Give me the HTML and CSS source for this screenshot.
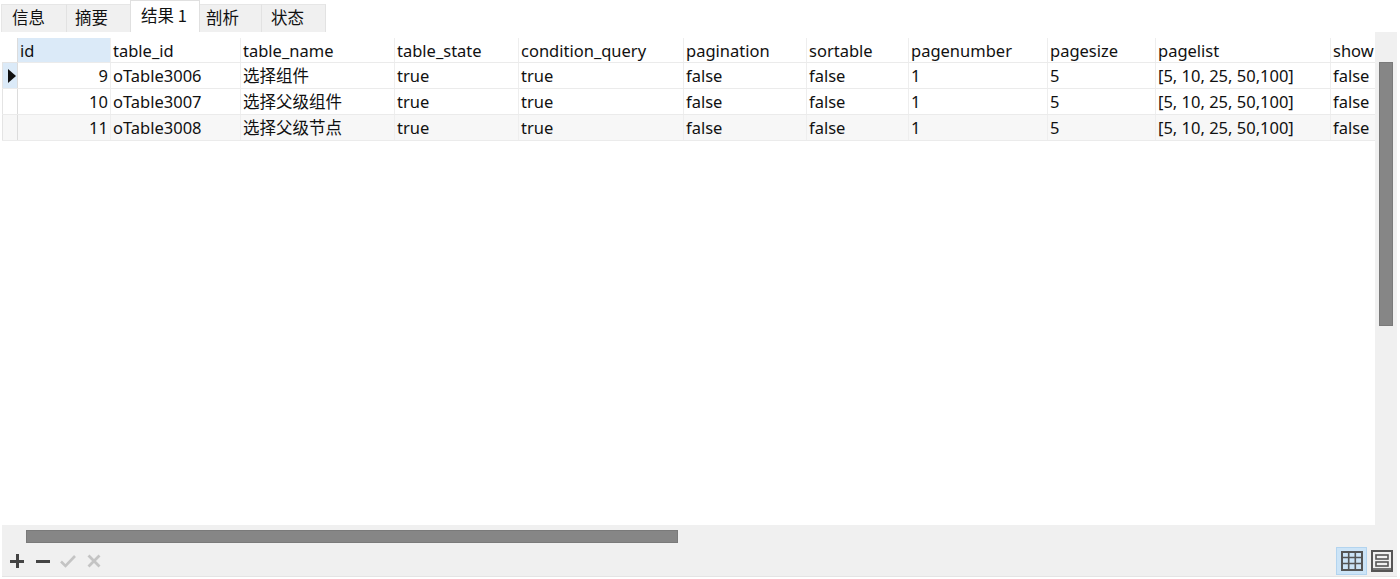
FILE: index.html
```html
<!DOCTYPE html>
<html lang="zh">
<head>
<meta charset="utf-8">
<link rel="stylesheet" href="styles.css">
</head>
<body>
<div class="app">
  <div class="tabs">
    <div class="tab t1">信息</div>
    <div class="tab t2">摘要</div>
    <div class="tab active t3">结果 1</div>
    <div class="tab t4">剖析</div>
    <div class="tab t5">状态</div>
  </div>
  <div class="frame">
    <div class="body-row">
      <div class="view">
        <table class="grid">
          <colgroup>
            <col class="c-rh"><col class="c-id"><col class="c-tid"><col class="c-tname"><col class="c-tstate"><col class="c-cq"><col class="c-pag"><col class="c-sort"><col class="c-pn"><col class="c-ps"><col class="c-pl"><col class="c-show">
          </colgroup>
          <thead>
            <tr>
              <th class="rh"></th>
              <th class="sel">id</th>
              <th>table_id</th>
              <th>table_name</th>
              <th>table_state</th>
              <th>condition_query</th>
              <th>pagination</th>
              <th>sortable</th>
              <th>pagenumber</th>
              <th>pagesize</th>
              <th>pagelist</th>
              <th>show</th>
            </tr>
          </thead>
          <tbody>
            <tr>
              <td class="rh cur"><span class="arrow"></span></td>
              <td class="num">9</td><td>oTable3006</td><td>选择组件</td><td>true</td><td>true</td><td>false</td><td>false</td><td>1</td><td>5</td><td>[5, 10, 25, 50,100]</td><td>false</td>
            </tr>
            <tr>
              <td class="rh"></td>
              <td class="num">10</td><td>oTable3007</td><td>选择父级组件</td><td>true</td><td>true</td><td>false</td><td>false</td><td>1</td><td>5</td><td>[5, 10, 25, 50,100]</td><td>false</td>
            </tr>
            <tr class="alt">
              <td class="rh"></td>
              <td class="num">11</td><td>oTable3008</td><td>选择父级节点</td><td>true</td><td>true</td><td>false</td><td>false</td><td>1</td><td>5</td><td>[5, 10, 25, 50,100]</td><td>false</td>
            </tr>
          </tbody>
        </table>
      </div>
      <div class="vscroll"><div class="vthumb"></div></div>
    </div>
    <div class="hscroll"><div class="hthumb"></div></div>
    <div class="toolbar">
      <div class="tools-left">
        <span class="ico plus"></span>
        <span class="ico minus"></span>
        <svg class="ico-svg" width="18" height="16" viewBox="0 0 18 16"><path d="M2 8.5 L6.5 13 L16 3" fill="none" stroke="#c4c4c4" stroke-width="2.6"/></svg>
        <svg class="ico-svg" width="16" height="16" viewBox="0 0 16 16"><path d="M2.5 2.5 L13.5 13.5 M13.5 2.5 L2.5 13.5" fill="none" stroke="#c4c4c4" stroke-width="2.8"/></svg>
      </div>
      <div class="tools-right">
        <div class="vbtn on">
          <svg width="22" height="20" viewBox="0 0 22 20"><rect x="1" y="1" width="20" height="18" fill="none" stroke="#555" stroke-width="2"/><path d="M1 6.5H21M1 12.5H21M7.7 1V19M14.3 1V19" stroke="#555" stroke-width="1.6"/></svg>
        </div>
        <div class="vbtn form">
          <svg width="22" height="22" viewBox="0 0 22 22"><rect x="1" y="1" width="20" height="20" fill="none" stroke="#555" stroke-width="2"/><rect x="5" y="5" width="12" height="4" fill="none" stroke="#555" stroke-width="1.6"/><rect x="5" y="12" width="12" height="4" fill="none" stroke="#555" stroke-width="1.6"/><path d="M1 19H21" stroke="#555" stroke-width="1.6"/></svg>
        </div>
      </div>
    </div>
  </div>
</div>
</body>
</html>
```

FILE: styles.css
```css
html, body {
  margin: 0;
  padding: 0;
  background: #ffffff;
}
body {
  font-family: "Noto Sans", "Noto Sans CJK SC", sans-serif;
  color: #111;
}
.app {
  width: 1400px;
  height: 579px;
  display: flex;
  flex-direction: column;
  overflow: hidden;
}
.tabs {
  display: flex;
  align-items: flex-end;
  height: 32px;
  padding-left: 1px;
  font-size: 16.5px;
  font-family: "Noto Sans CJK SC", sans-serif;
}
.tab {
  height: 28px;
  box-sizing: border-box;
  background: #f0f0f0;
  border-right: 1px solid #e2e2e2;
  border-top: 1px solid #e6e6e6;
  padding-left: 10px;
  line-height: 24px;
  color: #111;
}
.t1 { width: 66px; border-left: 1px solid #e6e6e6; }
.t2 { width: 64px; padding-left: 8px; }
.t3 { width: 70px; }
.t4 { width: 62px; padding-left: 6px; }
.t5 { width: 64px; padding-left: 9px; }
.tab.active {
  background: #ffffff;
  height: 32px;
  line-height: 28px;
  border-top: 1px solid #e0e0e0;
  border-left: 1px solid #e0e0e0;
  border-right: 1px solid #e0e0e0;
  margin-left: -1px;
}
.frame {
  flex: 1;
  display: flex;
  flex-direction: column;
  margin-left: 2px;
  margin-right: 3px;
  margin-bottom: 2px;
  background: #f0f0f0;
  border-bottom: 1px solid #e4e4e4;
}
.body-row {
  display: flex;
  height: 493px;
}
.view {
  flex: 1;
  background: #ffffff;
  overflow: hidden;
  padding-top: 6px;
}
.grid {
  border-collapse: collapse;
  table-layout: fixed;
  width: 1400px;
  font-size: 16.5px;
  line-height: 20px;
}
.c-rh { width: 15px; }
.c-id { width: 93px; }
.c-tid { width: 130px; }
.c-tname { width: 154px; }
.c-tstate { width: 124px; }
.c-cq { width: 165px; }
.c-pag { width: 123px; }
.c-sort { width: 102px; }
.c-pn { width: 139px; }
.c-ps { width: 108px; }
.c-pl { width: 175px; }
.c-show { width: 72px; }
.grid th, .grid td {
  text-align: left;
  font-weight: normal;
  padding: 0 0 0 2px;
  white-space: nowrap;
  overflow: hidden;
  border-right: 1px solid #eeeeee;
  border-bottom: 1px solid #ebebeb;
}
.grid th {
  height: 23px;
  vertical-align: bottom;
  padding-bottom: 1px;
}
.grid td {
  height: 25px;
}
.grid th.sel {
  background: #dbeaf8;
}
.grid .rh {
  padding: 0;
  border-right: 1px solid #dcdcdc;
  border-left: 1px solid #e4e4e4;
}
.grid th.rh {
  border-left: none;
  border-bottom: 1px solid #e4e4e4;
}
.grid td.rh.cur {
  background: #dbeaf8;
}
.arrow {
  display: block;
  width: 0;
  height: 0;
  margin-left: 5px;
  border-top: 7px solid transparent;
  border-bottom: 7px solid transparent;
  border-left: 8px solid #111;
}
.grid td.num {
  text-align: right;
  padding-right: 2px;
  padding-left: 0;
}
.grid tr.alt td {
  background: #f7f7f7;
}
.vscroll {
  width: 22px;
  background: #f0f0f0;
  display: flex;
  justify-content: center;
  padding-top: 30px;
  box-sizing: border-box;
}
.vthumb {
  width: 14px;
  height: 264px;
  background: #868686;
  border: 1px solid #7a7a7a;
  box-sizing: border-box;
}
.hscroll {
  height: 21px;
  display: flex;
  align-items: center;
  padding-left: 24px;
}
.hthumb {
  width: 652px;
  height: 13px;
  background: #868686;
  border: 1px solid #7a7a7a;
  box-sizing: border-box;
  margin-top: 2px;
}
.toolbar {
  flex: 1;
  display: flex;
  justify-content: space-between;
  align-items: center;
}
.tools-left {
  display: flex;
  align-items: center;
  gap: 9px;
  padding-left: 8px;
}
.ico {
  position: relative;
  display: block;
  width: 14px;
  height: 14px;
}
.ico.plus::before, .ico.plus::after, .ico.minus::before {
  content: "";
  position: absolute;
  background: #444;
}
.ico.plus::before { left: 0; top: 5.5px; width: 14px; height: 3px; }
.ico.plus::after { left: 5.5px; top: 0; width: 3px; height: 14px; }
.ico.minus::before { left: 0; top: 5.5px; width: 14px; height: 3px; }
.ico.minus { margin-left: 3px; }
.ico-svg { display: block; }
.tools-right {
  display: flex;
  align-items: center;
  gap: 3px;
  padding-right: 3px;
}
.vbtn {
  width: 31px;
  height: 28px;
  display: flex;
  align-items: center;
  justify-content: center;
  box-sizing: border-box;
}
.vbtn.form {
  width: 24px;
}
.vbtn.on {
  background: #cce4f7;
  border: 1px solid #b3d4ef;
}
```
